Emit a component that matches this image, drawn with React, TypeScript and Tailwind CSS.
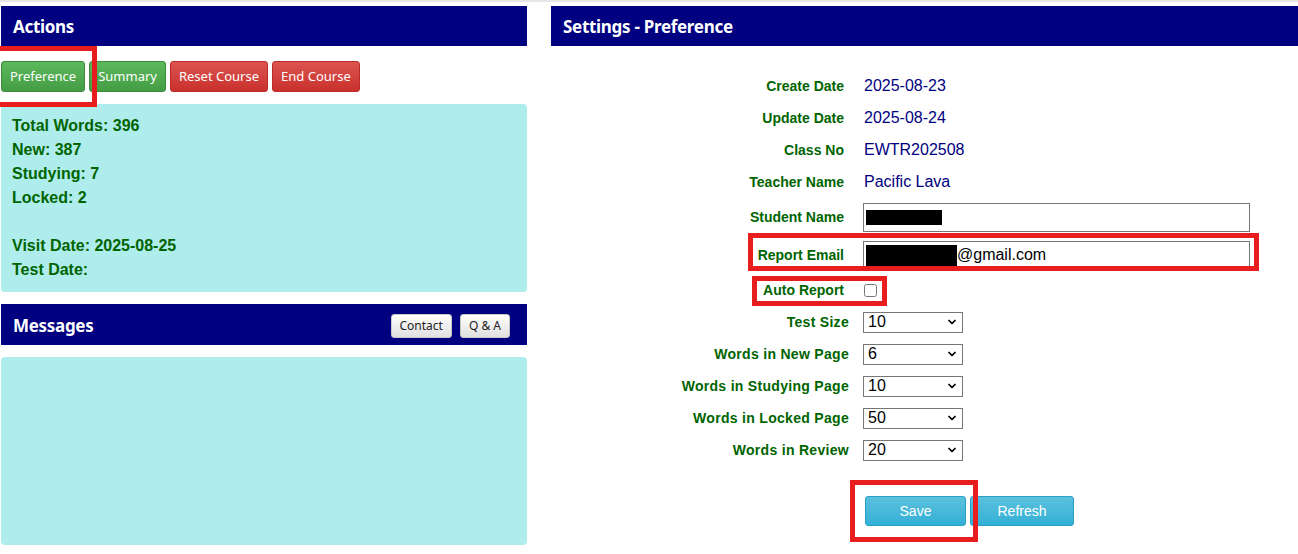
import { ChevronDown } from "lucide-react";

const stats = [
  "Total Words: 396",
  "New: 387",
  "Studying: 7",
  "Locked: 2",
  "",
  "Visit Date: 2025-08-25",
  "Test Date:",
];

const infoRows = [
  { label: "Create Date", value: "2025-08-23" },
  { label: "Update Date", value: "2025-08-24" },
  { label: "Class No", value: "EWTR202508" },
  { label: "Teacher Name", value: "Pacific Lava" },
];

const selectRows = [
  { label: "Test Size", value: "10" },
  { label: "Words in New Page", value: "6" },
  { label: "Words in Studying Page", value: "10" },
  { label: "Words in Locked Page", value: "50" },
  { label: "Words in Review", value: "20" },
];

function Header({
  title,
  tall,
  children,
}: {
  title: string;
  tall?: boolean;
  children?: React.ReactNode;
}) {
  return (
    <div
      className={`flex items-center justify-between bg-[#000080] pl-[12px] pr-[17px] ${tall ? "h-[41px]" : "h-[40px]"}`}
    >
      <h2 className="pt-[2px] font-['Noto_Sans',sans-serif] text-[17px] font-bold tracking-[-0.3px] text-white">
        {title}
      </h2>
      {children}
    </div>
  );
}

function ActionButton({ label, color }: { label: string; color: "green" | "red" }) {
  const cls =
    color === "green"
      ? "border-[#3d8b3d] bg-gradient-to-b from-[#5cb85c] to-[#449d44]"
      : "border-[#b92c28] bg-gradient-to-b from-[#db534f] to-[#c9302c]";
  return (
    <button
      type="button"
      className={`h-[31px] rounded-[3px] border px-[8px] font-['Noto_Sans',sans-serif] text-[13px] text-white ${cls}`}
    >
      {label}
    </button>
  );
}

function SmallButton({ label }: { label: string }) {
  return (
    <button
      type="button"
      className="mt-[3px] h-[24px] rounded-[3px] border border-[#c8c8c8] bg-gradient-to-b from-white to-[#e0e0e0] px-[8px] font-['Noto_Sans',sans-serif] text-[12px] text-[#222]"
    >
      {label}
    </button>
  );
}

function Mark({ className }: { className: string }) {
  return <div className={`pointer-events-none absolute border-[5px] border-[#e81e1e] ${className}`} />;
}

export default function App() {
  return (
    <div className="relative h-[554px] w-[1298px] overflow-hidden border-t-[2px] border-[#e6e6e6] bg-white font-['Liberation_Sans',Arial,sans-serif]">
      <div className="flex gap-[24px] pl-[1px] pt-[4px]">
        {/* left column */}
        <div className="flex w-[526px] flex-col">
          <Header title="Actions" />
          <div className="flex gap-[4px] py-[15px]">
            <ActionButton label="Preference" color="green" />
            <ActionButton label="Summary" color="green" />
            <ActionButton label="Reset Course" color="red" />
            <ActionButton label="End Course" color="red" />
          </div>
          <div className="-mt-[3px] h-[188px] rounded-[4px] bg-[#afeded] px-[11px] pt-[10px] text-[16px] font-bold leading-[24px] text-[#006400]">
            {stats.map((s, i) => (
              <div key={i} className="h-[24px]">
                {s}
              </div>
            ))}
          </div>
          <div className="mt-[12px]">
            <Header title="Messages" tall>
              <div className="flex gap-[8px]">
                <SmallButton label="Contact" />
                <SmallButton label="Q & A" />
              </div>
            </Header>
          </div>
          <div className="mt-[12px] h-[188px] rounded-[4px] bg-[#afeded]" />
        </div>

        {/* right column */}
        <div className="flex flex-1 flex-col">
          <Header title="Settings - Preference" />
          <div className="pt-[24px]">
            {infoRows.map((r) => (
              <div key={r.label} className="flex h-[32px] items-center">
                <div className="w-[293px] text-right text-[14px] font-bold text-[#006400]">{r.label}</div>
                <div className="pl-[20px] text-[16px] text-[#000080]">{r.value}</div>
              </div>
            ))}
            <div className="flex h-[38px] items-center">
              <div className="w-[293px] text-right text-[14px] font-bold text-[#006400]">Student Name</div>
              <div className="pl-[19px]">
                <div className="flex h-[29px] w-[387px] items-center border border-[#767676] px-[2px]">
                  <span className="h-[15px] w-[76px] bg-black" />
                </div>
              </div>
            </div>
            <div className="flex h-[38px] items-center">
              <div className="w-[293px] text-right text-[14px] font-bold text-[#006400]">Report Email</div>
              <div className="pl-[19px]">
                <div className="flex h-[29px] w-[387px] items-center border border-[#767676] px-[2px] text-[16px] text-black">
                  <span className="h-[21px] w-[91px] bg-black" />
                  <span>@gmail.com</span>
                </div>
              </div>
            </div>
            <div className="flex h-[32px] items-center">
              <div className="w-[293px] text-right text-[14px] font-bold text-[#006400]">Auto Report</div>
              <div className="pl-[20px]">
                <input type="checkbox" className="m-0 block h-[13px] w-[13px]" />
              </div>
            </div>
            {selectRows.map((r) => (
              <div key={r.label} className="flex h-[32px] items-center">
                <div className="w-[298px] text-right text-[14px] font-bold tracking-[0.3px] text-[#006400]">{r.label}</div>
                <div className="pl-[14px]">
                  <div className="flex h-[21px] w-[100px] items-center justify-between border border-[#767676] pl-[4px] pr-[4px] text-[16px] text-black">
                    <span>{r.value}</span>
                    <ChevronDown className="h-[12px] w-[12px]" strokeWidth={3.5} />
                  </div>
                </div>
              </div>
            ))}
            <div className="mt-[30px] flex pl-[314px]">
              <button
                type="button"
                className="h-[30px] w-[101px] rounded-[3px] border border-[#2aa0c8] bg-gradient-to-b from-[#5bc0de] to-[#31b0d5] text-[14px] text-white"
              >
                Save
              </button>
              <button
                type="button"
                className="ml-[4px] h-[30px] w-[104px] rounded-[3px] border border-[#2aa0c8] bg-gradient-to-b from-[#5bc0de] to-[#31b0d5] text-[14px] text-white"
              >
                Refresh
              </button>
            </div>
          </div>
        </div>
      </div>

      {/* annotation boxes */}
      <Mark className="left-0 top-[44px] h-[61px] w-[97px] border-l-0" />
      <Mark className="left-[748px] top-[231px] h-[38px] w-[511px]" />
      <Mark className="left-[752px] top-[274px] h-[30px] w-[135px]" />
      <Mark className="left-[850px] top-[478px] h-[62px] w-[128px]" />
    </div>
  );
}
